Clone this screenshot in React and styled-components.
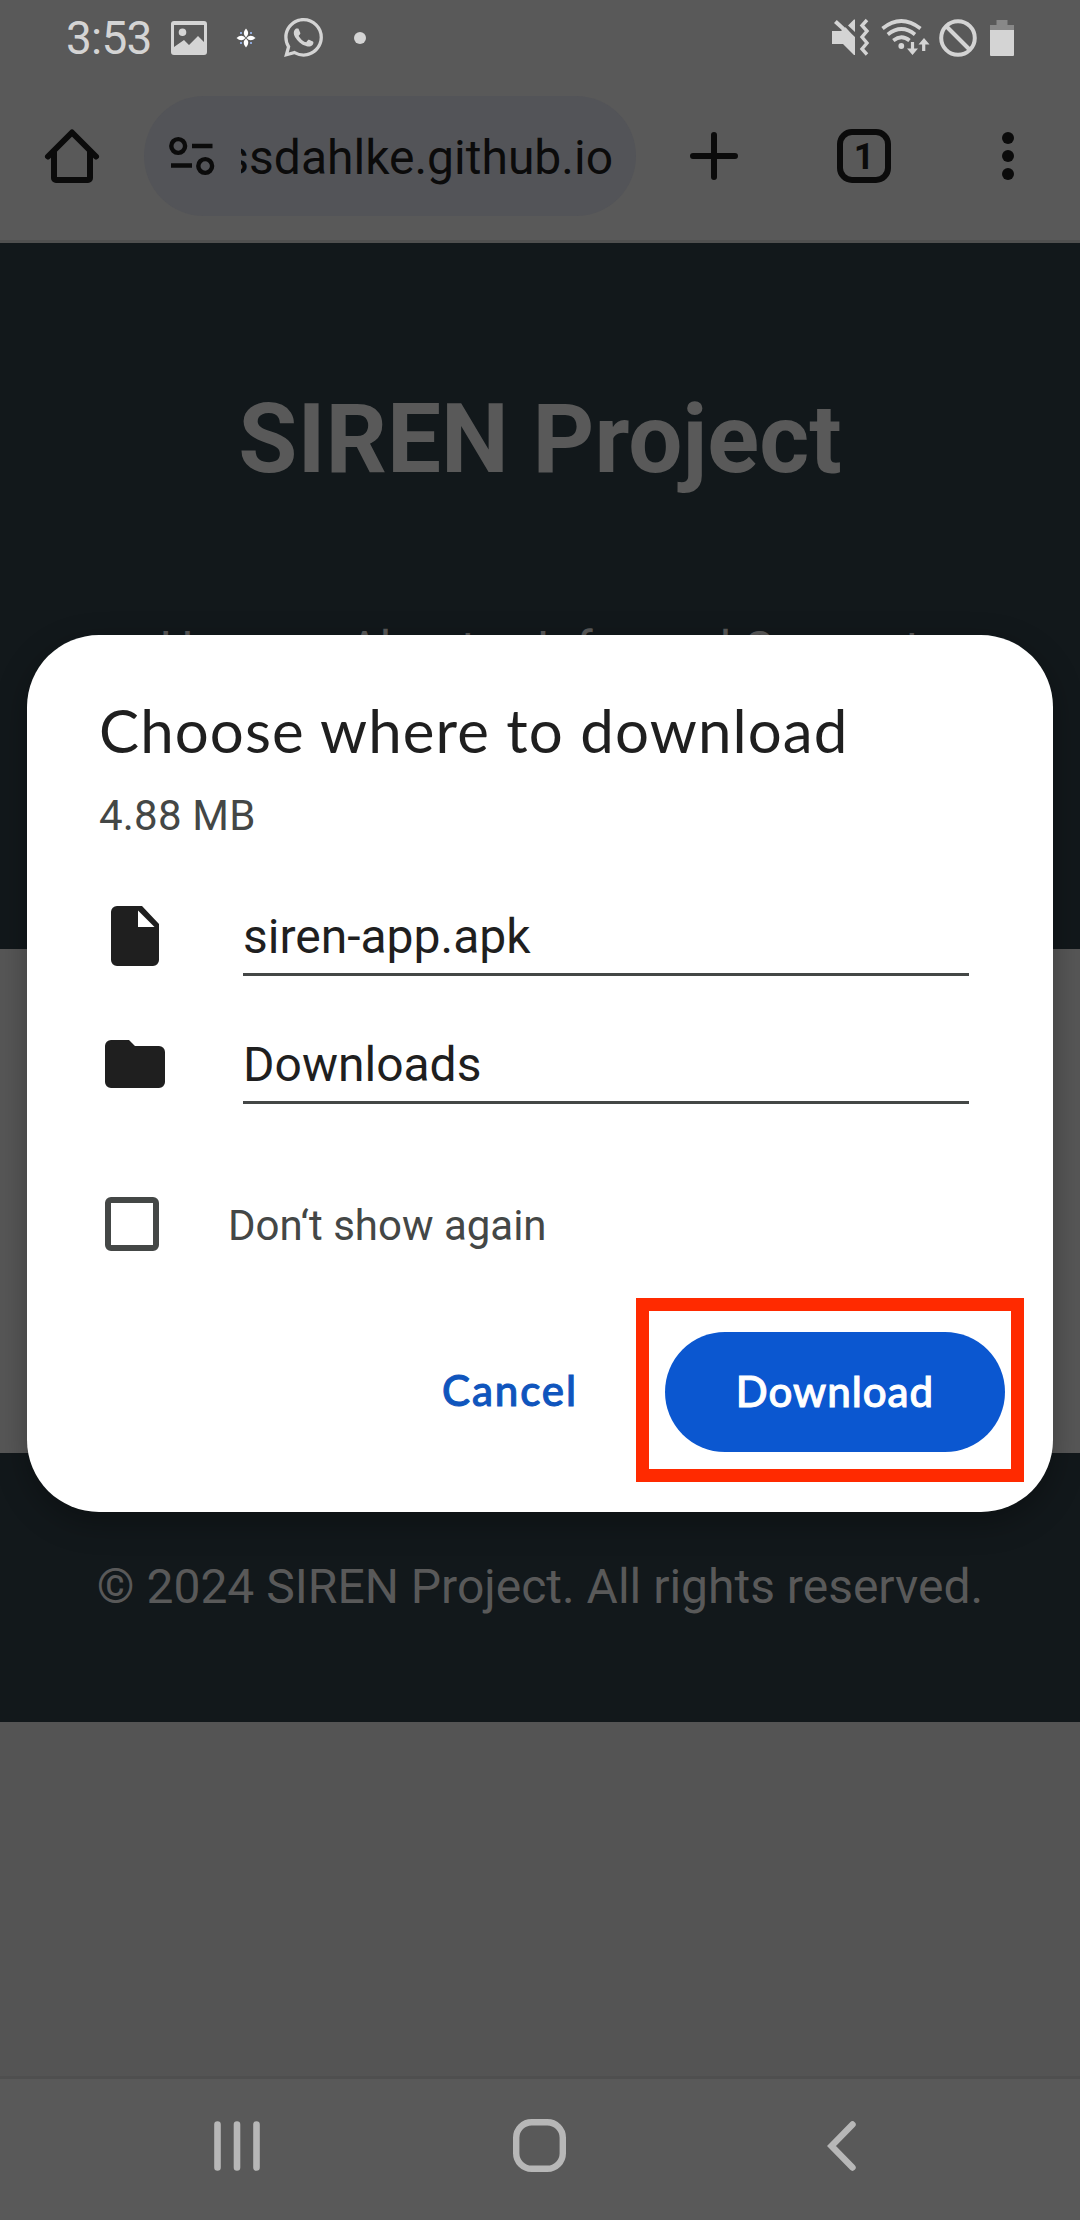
import React from "react";
import styled, { createGlobalStyle } from "styled-components";

const Global = createGlobalStyle`
  * { box-sizing: border-box; }
  html, body { margin: 0; padding: 0; }
  body { width: 1080px; height: 2220px; overflow: hidden; background: #545454; font-family: Roboto, "Noto Sans", sans-serif; }
`;

const Phone = styled.div`
  position: relative;
  width: 1080px;
  height: 2220px;
  display: flex;
  flex-direction: column;
  background: #545454;
  overflow: hidden;
`;

const StatusBar = styled.header`
  height: 72px;
  flex: none;
  display: flex;
  justify-content: space-between;
  align-items: flex-start;
  padding: 0 66px 0 66px;
  background: #595959;
  color: #d4d4d4;
`;

const StatusGroup = styled.div`
  display: flex;
  align-items: center;
  height: 75px;
`;

const Clock = styled.span`
  width: 105px;
  font-size: 46px;
  line-height: 76px;
  letter-spacing: -0.8px;
  padding-top: 1px;
  white-space: nowrap;
`;

const Icon = styled.svg`
  display: block;
  flex: none;
  overflow: visible;
  margin-left: ${(p) => p.$gap || 0}px;
`;

const Toolbar = styled.div`
  height: 171px;
  flex: none;
  display: flex;
  align-items: center;
  padding: 0 48px 0 45px;
  background: #595959;
  border-bottom: 3px solid #505050;
`;

const UrlPill = styled.div`
  width: 492px;
  height: 120px;
  margin-left: 45px;
  border-radius: 60px;
  background: #535458;
  display: flex;
  align-items: center;
  padding: 0 25px;
`;

const UrlText = styled.div`
  flex: none;
  width: 372px;
  margin-left: 26px;
  padding-top: 4px;
  overflow: hidden;
  display: flex;
  justify-content: flex-end;
  font-size: 48px;
  line-height: 60px;
  white-space: nowrap;
  color: #0b0b0b;
`;

const TabCount = styled.div`
  width: 54px;
  height: 54px;
  margin-left: 99px;
  border: 6px solid #0b0b0b;
  border-radius: 15px;
  display: flex;
  align-items: center;
  justify-content: center;
  padding-top: 2px;
  font-size: 36px;
  line-height: 40px;
  font-weight: 700;
  color: #0b0b0b;
`;

const SiteHeader = styled.section`
  height: 706px;
  flex: none;
  background: #12181b;
  color: #595959;
  text-align: center;
`;

const SiteTitle = styled.h1`
  margin: 0;
  padding-top: 140px;
  font-size: 96px;
  line-height: 112px;
  font-weight: 700;
`;

const SiteNav = styled.nav`
  margin-top: 126px;
  display: flex;
  justify-content: center;
  gap: 60px;
  font-size: 48px;
  line-height: 56px;
`;

const SiteMain = styled.main`
  height: 504px;
  flex: none;
  background: #575757;
`;

const SiteFooter = styled.footer`
  height: 269px;
  flex: none;
  padding-top: 106px;
  background: #12181b;
  color: #595959;
  text-align: center;
  font-size: 48px;
  line-height: 56px;
`;

const Blank = styled.div`
  flex: 1;
`;

const SystemNav = styled.nav`
  height: 144px;
  flex: none;
  display: flex;
  padding: 42px 0 0 214px;
  background: #595959;
  border-top: 3px solid #4f4f4f;
`;

const Dialog = styled.div`
  position: absolute;
  left: 27px;
  top: 635px;
  width: 1026px;
  height: 877px;
  padding: 57px 0 0 72px;
  border-radius: 72px;
  background: #fff;
  box-shadow: 0 10px 32px rgba(0, 0, 0, 0.3);
  color: #1f1f1f;
  display: flex;
  flex-direction: column;
`;

const DialogTitle = styled.h2`
  margin: 0;
  height: 76px;
  font-family: Lato, "Open Sans", sans-serif;
  font-size: 60px;
  line-height: 76px;
  font-weight: 400;
  letter-spacing: 1.08px;
  white-space: nowrap;
`;

const FileSize = styled.div`
  margin-top: 23px;
  height: 50px;
  font-size: 42px;
  line-height: 50px;
  letter-spacing: 0.2px;
  color: #444746;
`;

const FieldRow = styled.div`
  display: flex;
  align-items: flex-start;
  margin-top: ${(p) => p.$top}px;
`;

const IconSlot = styled.div`
  width: 144px;
  height: 72px;
  flex: none;
`;

const Field = styled.div`
  width: 726px;
  height: 75px;
  padding-top: 8px;
  border-bottom: 3px solid #444746;
  font-size: 48px;
  line-height: 56px;
`;

const CheckRow = styled.label`
  display: flex;
  align-items: center;
  height: 54px;
  margin-top: 93px;
  padding-left: 6px;
  font-size: 42px;
  line-height: 50px;
  color: #444746;
`;

const CheckLabel = styled.span`
  padding-top: 4px;
`;

const Box = styled.span`
  width: 54px;
  height: 54px;
  border: 6px solid #444746;
  border-radius: 6px;
  margin-right: 69px;
`;

const Actions = styled.div`
  display: flex;
  align-items: center;
  margin-top: 47px;
  height: 184px;
`;

const Button = styled.button`
  font-family: Lato, "Open Sans", sans-serif;
  font-size: 42px;
  line-height: 50px;
  font-weight: 500;
  -webkit-text-stroke: 1px currentColor;
  border: 0;
  padding: 0;
  white-space: nowrap;
`;

const Cancel = styled(Button)`
  margin-left: 343px;
  width: 134px;
  text-align: left;
  letter-spacing: 1.9px;
  background: transparent;
  color: #0f55bd;
`;

const Highlight = styled.div`
  width: 388px;
  height: 184px;
  margin-left: 60px;
  border: 13px solid #ff2a00;
  padding: 21px 0 0 16px;
`;

const Download = styled(Button)`
  width: 340px;
  height: 120px;
  padding-bottom: 3px;
  letter-spacing: 1px;
  border-radius: 60px;
  background: #0b57d0;
  color: #fff;
`;

const ink = "#0b0b0b";
const light = "#d4d4d4";

function StatusIcons() {
  return (
    <StatusGroup>
      <Icon width="37" height="37" viewBox="0 0 37 37" fill={light}>
        <path d="M0 12h9l4.500-3.700L23 18.500V36h-1L11 25H0zM2 4l2.800-3L23 18v5zM16 6.500l6-6h1V13z" />
        <path d="M35 1l-5 5.500 5 5.500-5 6 5 6-5 6 5 5.500" fill="none" stroke={light} strokeWidth="3.400" />
      </Icon>
      <Icon $gap={12} width="48" height="37" viewBox="0 0 48 37" fill="none" stroke={light} strokeWidth="3.700">
        <path d="M1.500 9.500Q20-5.500 39.500 9.500M6.800 15.500Q20.500 4.500 34 15.500M12.300 21.500Q20.500 15 28.500 21.500" />
        <circle cx="20.300" cy="27" r="2.900" fill={light} stroke="none" />
        <path d="M31.500 23v10M42.700 32V23" strokeWidth="3.200" />
        <path d="M26 29.500h11l-5.500 6.500zM37.500 25.500h11l-5.500-6.500z" fill={light} stroke="none" />
      </Icon>
      <Icon $gap={10} width="38" height="38" viewBox="0 0 38 38" fill="none" stroke={light} strokeWidth="4">
        <circle cx="19" cy="19" r="16.800" />
        <path d="M7 7l24 24" />
      </Icon>
      <Icon $gap={13} width="24" height="36" viewBox="0 0 24 36">
        <path d="M6.500 0h11v5H24v6H0V5h6.500z" fill="#888" />
        <path d="M0 10h24v25a1 1 0 0 1-1 1H1a1 1 0 0 1-1-1z" fill={light} />
      </Icon>
    </StatusGroup>
  );
}

export default function App() {
  return (
    <Phone>
      <Global />
      <StatusBar>
        <StatusGroup>
          <Clock>3:53</Clock>
          <Icon width="36" height="34" viewBox="0 0 36 34">
            <path fillRule="evenodd" fill={light} d="M3 0h30a3 3 0 0 1 3 3v28a3 3 0 0 1-3 3H3a3 3 0 0 1-3-3V3a3 3 0 0 1 3-3zm0 4v22l10-7 5 5 9-9 6 6V4zM11.500 7.500a3.800 3.800 0 1 1 0 7.600a3.800 3.800 0 0 1 0-7.600z" />
          </Icon>
          <Icon $gap={30} width="18" height="18" viewBox="0 0 18 18" fill="#fff">
            <path d="M9-.5Q13.500 4.500 9 8.500 4.500 4.500 9-.5zM9 9.500q4.500 4 0 9-4.500-5 0-9zM-.5 9Q4.500 4.500 8.500 9 4.500 13.500-.5 9zM9.500 9q4-4.500 9 0-5 4.500-9 0z" />
            <path fill="#8fa8d8" d="M3 3h2v2H3zM13 3h2v2h-2zM3 13h2v2H3zM13 13h2v2h-2z" />
          </Icon>
          <Icon $gap={29} width="39" height="39" viewBox="0 0 24 24" fill={light}>
            <path d="M17.472 14.382c-.297-.149-1.758-.867-2.030-.967-.273-.099-.471-.148-.670.150-.197.297-.767.966-.940 1.164-.173.199-.347.223-.644.075-.297-.150-1.255-.463-2.390-1.475-.883-.788-1.480-1.761-1.653-2.059-.173-.297-.018-.458.130-.606.134-.133.298-.347.446-.520.149-.174.198-.298.298-.497.099-.198.050-.371-.025-.520-.075-.149-.669-1.612-.916-2.207-.242-.579-.487-.500-.669-.510-.173-.008-.371-.010-.570-.010-.198 0-.520.074-.792.372-.272.297-1.040 1.016-1.040 2.479 0 1.462 1.065 2.875 1.213 3.074.149.198 2.096 3.200 5.077 4.487.709.306 1.262.489 1.694.625.712.227 1.360.195 1.871.118.571-.085 1.758-.719 2.006-1.413.248-.694.248-1.289.173-1.413-.074-.124-.272-.198-.570-.347m-5.421 7.403h-.004a9.870 9.870 0 01-5.031-1.378l-.361-.214-3.741.982.998-3.648-.235-.374a9.860 9.860 0 01-1.510-5.260c.001-5.450 4.436-9.884 9.888-9.884 2.640 0 5.122 1.030 6.988 2.898a9.825 9.825 0 012.893 6.994c-.003 5.450-4.437 9.884-9.885 9.884m8.413-18.297A11.815 11.815 0 0012.050 0C5.495 0 .160 5.335.157 11.892c0 2.096.547 4.142 1.588 5.945L.057 24l6.305-1.654a11.882 11.882 0 005.683 1.448h.005c6.554 0 11.890-5.335 11.893-11.893a11.821 11.821 0 00-3.480-8.413z" />
          </Icon>
          <Icon $gap={31} width="12" height="12" viewBox="0 0 12 12">
            <circle cx="6" cy="6" r="6" fill={light} />
          </Icon>
        </StatusGroup>
        <StatusIcons />
      </StatusBar>

      <Toolbar>
        <Icon width="54" height="54" viewBox="0 0 54 54" fill="none" stroke={ink} strokeWidth="6" strokeLinecap="round">
          <path d="M3 27.500L27 3.500l24 24" strokeLinejoin="round" />
          <path d="M9 23v26a2 2 0 0 0 2 2h32a2 2 0 0 0 2-2V23" />
        </Icon>
        <UrlPill>
          <Icon width="46" height="38" viewBox="0 0 46 38" fill="none" stroke={ink} strokeWidth="4.400">
            <circle cx="9.200" cy="9" r="6.900" />
            <circle cx="36.200" cy="29" r="6.900" />
            <path d="M23 9h20.500M2 28.500h21" />
          </Icon>
          <UrlText>ssdahlke.github.io</UrlText>
        </UrlPill>
        <Icon $gap={54} width="48" height="48" viewBox="0 0 48 48" stroke={ink} strokeWidth="6" strokeLinecap="round">
          <path d="M24 3v42M3 24h42" />
        </Icon>
        <TabCount>1</TabCount>
        <Icon $gap={111} width="12" height="48" viewBox="0 0 12 48" fill={ink}>
          <circle cx="6" cy="6" r="6" />
          <circle cx="6" cy="24" r="6" />
          <circle cx="6" cy="42" r="6" />
        </Icon>
      </Toolbar>

      <SiteHeader>
        <SiteTitle>SIREN Project</SiteTitle>
        <SiteNav>
          <span>Home</span>
          <span>About</span>
          <span>Informed Consent</span>
        </SiteNav>
      </SiteHeader>
      <SiteMain />
      <SiteFooter>© 2024 SIREN Project. All rights reserved.</SiteFooter>
      <Blank />

      <SystemNav>
        <Icon width="46" height="50" viewBox="0 0 46 50" stroke="#b7b7b7" strokeWidth="6.600" strokeLinecap="round">
          <path d="M3.500 3.500v43M23 3.500v43M42.500 3.500v43" />
        </Icon>
        <Icon $gap={253} width="53" height="53" viewBox="0 0 53 53">
          <rect x="3.200" y="1.200" width="46.600" height="46.600" rx="15.500" fill="none" stroke="#b7b7b7" strokeWidth="6.400" />
        </Icon>
        <Icon $gap={261} width="29" height="50" viewBox="0 0 29 50" fill="none" stroke="#b7b7b7" strokeWidth="6.400" strokeLinecap="round">
          <path d="M25.500 3.500L4.500 25l21 21.500" />
        </Icon>
      </SystemNav>

      <Dialog>
        <DialogTitle>Choose where to download</DialogTitle>
        <FileSize>4.88 MB</FileSize>
        <FieldRow $top={60}>
          <IconSlot>
            <Icon $gap={12} width="48" height="72" viewBox="0 0 48 72">
              <path fillRule="evenodd" fill="#1f1f1f" d="M6 5h25l17 18v36a6 6 0 0 1-6 6H6a6 6 0 0 1-6-6V11a6 6 0 0 1 6-6zm21 4.500v16.500h16.500z" />
            </Icon>
          </IconSlot>
          <Field>siren-app.apk</Field>
        </FieldRow>
        <FieldRow $top={53}>
          <IconSlot>
            <Icon $gap={6} width="60" height="72" viewBox="0 0 60 72">
              <path fill="#1f1f1f" d="M6 11h18l6 6h24a6 6 0 0 1 6 6v30a6 6 0 0 1-6 6H6a6 6 0 0 1-6-6V17a6 6 0 0 1 6-6z" />
            </Icon>
          </IconSlot>
          <Field>Downloads</Field>
        </FieldRow>
        <CheckRow>
          <Box />
          <CheckLabel>Don‘t show again</CheckLabel>
        </CheckRow>
        <Actions>
          <Cancel>Cancel</Cancel>
          <Highlight>
            <Download>Download</Download>
          </Highlight>
        </Actions>
      </Dialog>
    </Phone>
  );
}
